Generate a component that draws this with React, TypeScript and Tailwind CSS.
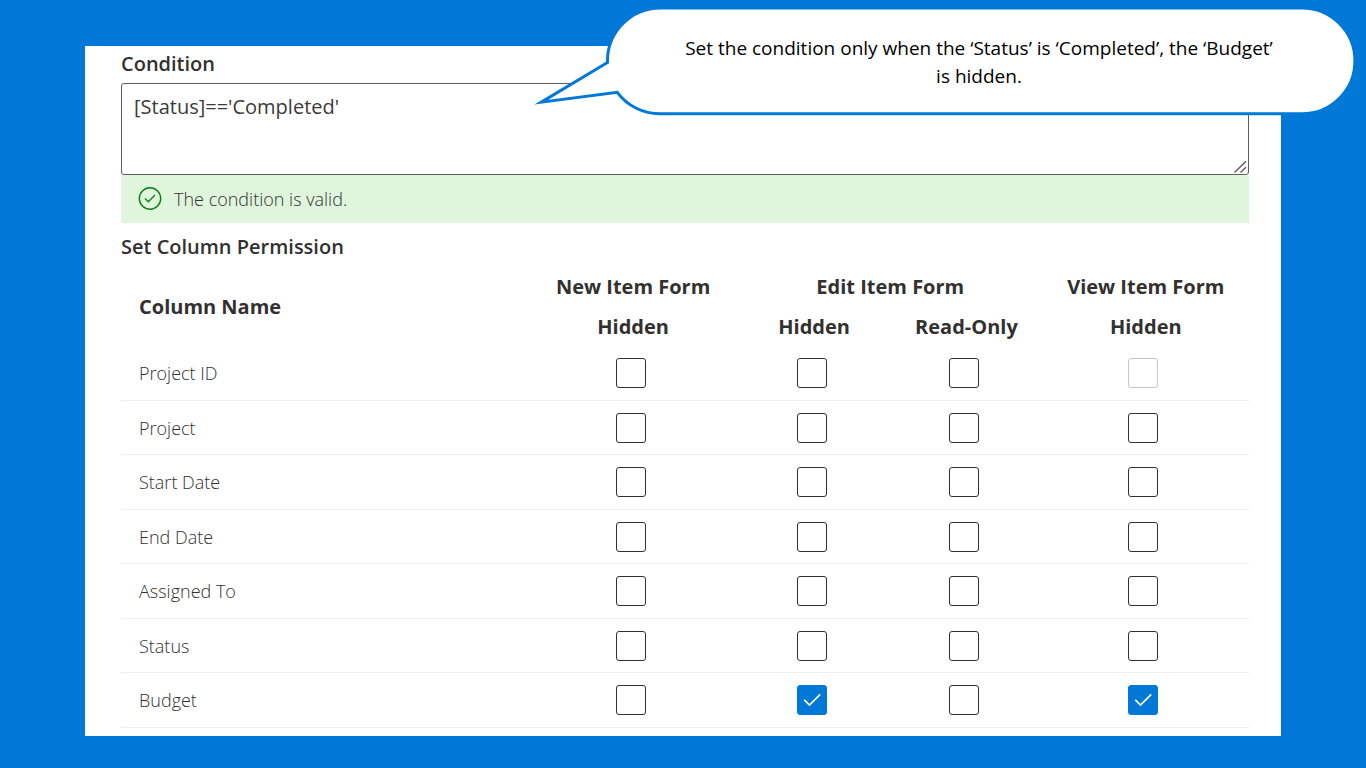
import { useState } from "react";

type Permission = "newHidden" | "editHidden" | "editReadOnly" | "viewHidden";

type Row = {
  name: string;
  checked: Permission[];
  disabled?: Permission[];
};

const permissions: { key: Permission; label: string }[] = [
  { key: "newHidden", label: "New Item Form: Hidden" },
  { key: "editHidden", label: "Edit Item Form: Hidden" },
  { key: "editReadOnly", label: "Edit Item Form: Read-Only" },
  { key: "viewHidden", label: "View Item Form: Hidden" },
];

const rows: Row[] = [
  { name: "Project ID", checked: [], disabled: ["viewHidden"] },
  { name: "Project", checked: [] },
  { name: "Start Date", checked: [] },
  { name: "End Date", checked: [] },
  { name: "Assigned To", checked: [] },
  { name: "Status", checked: [] },
  { name: "Budget", checked: ["editHidden", "viewHidden"] },
];

function PermissionBox({
  label,
  initial,
  disabled,
}: {
  label: string;
  initial: boolean;
  disabled: boolean;
}) {
  const [on, setOn] = useState(initial);
  return (
    <label className="relative mr-[5px] block size-[30px]">
      <input
        type="checkbox"
        aria-label={label}
        checked={on}
        disabled={disabled}
        onChange={(e) => setOn(e.target.checked)}
        className="block size-[30px] appearance-none rounded-[3px] border border-[#323130] bg-white checked:border-[#0078d7] checked:bg-[#0078d7] disabled:border-[#c8c6c4]"
      />
      {on && (
        <svg
          viewBox="0 0 30 30"
          aria-hidden="true"
          className="pointer-events-none absolute inset-0 size-[30px]"
          fill="none"
          stroke="white"
          strokeWidth="1.7"
        >
          <path d="M7.3 14.8 L12.5 20 L23.2 9.3" />
        </svg>
      )}
    </label>
  );
}

function Callout() {
  return (
    <aside className="absolute top-0 right-0 h-[120px] w-[836px]">
      <svg
        viewBox="530 0 836 120"
        aria-hidden="true"
        className="absolute inset-0 h-[120px] w-[836px]"
      >
        <path
          d="M660.5 8 H1302 A52.9 52.9 0 0 1 1302 113.8 H660.5 A52.9 52.9 0 0 1 617.3 92.3 L541.3 102.2 L607.5 62.5 A53 53 0 0 1 660.5 8 Z"
          fill="white"
          stroke="#0078d7"
          strokeWidth="3"
          strokeMiterlimit="10"
        />
      </svg>
      <p className="relative ml-[78px] pt-[34px] pr-4 text-center text-[19px] leading-7 text-black">
        Set the condition only when the ‘Status’ is ‘Completed’, the ‘Budget’
        <br />
        is hidden.
      </p>
    </aside>
  );
}

export default function App() {
  const [condition, setCondition] = useState("[Status]=='Completed'");

  return (
    <div className="relative min-h-screen bg-[#0078d7] px-[85px] pt-[46px] pb-8 font-['Open_Sans','Noto_Sans',sans-serif] text-[#323130]">
      <main className="bg-white pr-8 pb-2 pl-9">
        <label
          htmlFor="condition"
          className="flex h-[37px] items-center pb-0.5 text-[20px] leading-7 font-semibold"
        >
          Condition
        </label>
        <div className="relative">
          <textarea
            id="condition"
            spellCheck={false}
            value={condition}
            onChange={(e) => setCondition(e.target.value)}
            className="block h-[92px] w-full resize-none rounded-[3px] border border-[#605e5c] bg-white px-3 py-[9px] text-[20px] leading-7 text-[#3b3a39] outline-none"
          />
          <svg
            viewBox="0 0 16 16"
            aria-hidden="true"
            className="pointer-events-none absolute right-0 bottom-0 size-4"
            stroke="#605e5c"
            strokeWidth="1.4"
          >
            <path d="M1.5 13.5 L13 2.3 M7.5 13.5 L13 8.2" />
          </svg>
        </div>
        <div
          role="status"
          className="flex h-12 items-center bg-[#dff6dd] pl-[17px] text-[18px] leading-7 font-light"
        >
          <svg
            viewBox="0 0 24 24"
            aria-hidden="true"
            className="mr-3 size-6"
            fill="none"
            stroke="#107c10"
            strokeWidth="1.4"
          >
            <circle cx="12" cy="11.5" r="10.7" />
            <path d="M7 11.5 L10.3 14.7 L17 8" />
          </svg>
          The condition is valid.
        </div>
        <h2 className="flex h-[43px] items-center pt-1 text-[20px] leading-7 font-semibold">
          Set Column Permission
        </h2>

        <table className="w-full table-fixed border-separate border-spacing-0">
          <colgroup>
            <col className="w-[36.1%]" />
            <col className="w-[18.6%]" />
            <col className="w-[13.5%]" />
            <col className="w-[13.5%]" />
            <col className="w-[18.3%]" />
          </colgroup>
          <thead className="text-[20px] leading-7 font-bold">
            <tr className="h-10">
              <th rowSpan={2} className="p-0 pt-0.5 pl-[18px] text-left">
                Column Name
              </th>
              <th className="p-0 pt-0.5">New Item Form</th>
              <th colSpan={2} className="p-0 pt-0.5">
                Edit Item Form
              </th>
              <th className="p-0 pt-0.5">View Item Form</th>
            </tr>
            <tr className="h-10">
              <th className="p-0 pt-0.5">Hidden</th>
              <th className="p-0 pt-0.5">Hidden</th>
              <th className="p-0 pt-0.5">Read-Only</th>
              <th className="p-0 pt-0.5">Hidden</th>
            </tr>
          </thead>
          <tbody className="text-[18px] leading-7">
            {rows.map((row) => (
              <tr key={row.name} className="h-[55px] even:h-[54px]">
                <th
                  scope="row"
                  className="border-b border-[#f0efee] p-0 pl-[18px] text-left font-light"
                >
                  {row.name}
                </th>
                {permissions.map((p) => (
                  <td key={p.key} className="border-b border-[#f0efee] p-0">
                    <div className="flex justify-center">
                      <PermissionBox
                        label={`${row.name}, ${p.label}`}
                        initial={row.checked.includes(p.key)}
                        disabled={row.disabled?.includes(p.key) ?? false}
                      />
                    </div>
                  </td>
                ))}
              </tr>
            ))}
          </tbody>
        </table>
      </main>
      <Callout />
    </div>
  );
}
